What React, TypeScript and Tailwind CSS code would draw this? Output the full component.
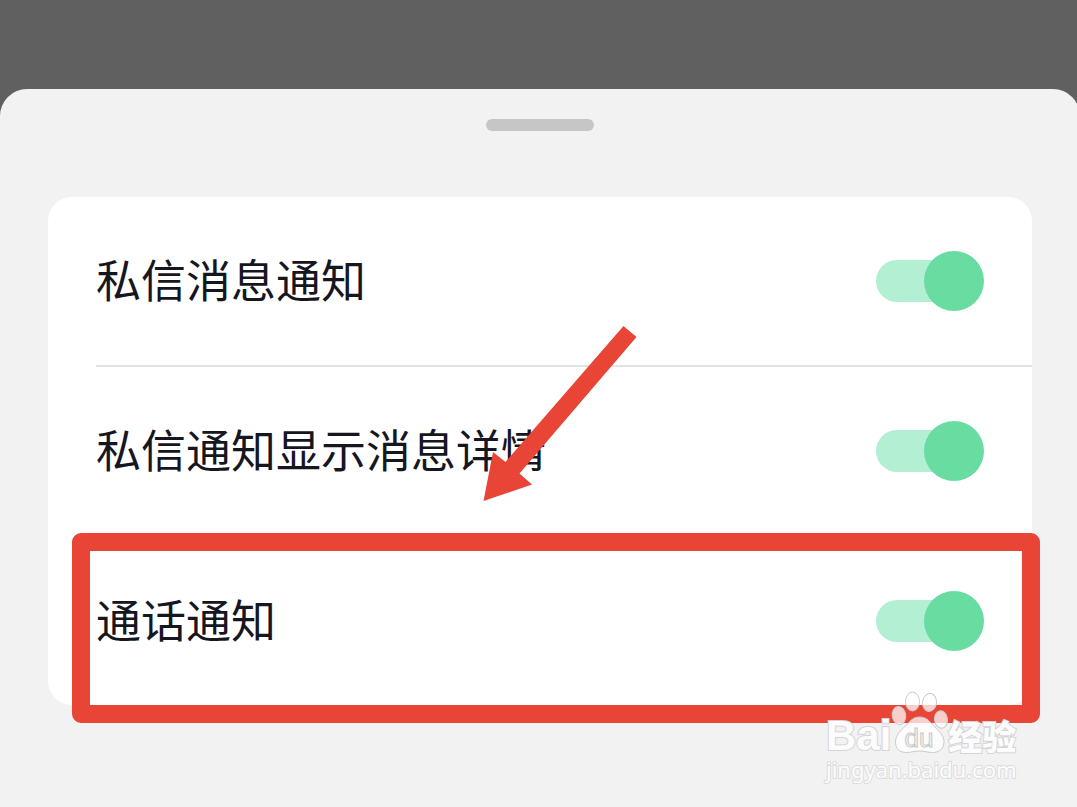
import { useState } from "react";

const options = [
  { id: "message", label: "私信消息通知" },
  { id: "detail", label: "私信通知显示消息详情" },
  { id: "call", label: "通话通知", highlighted: true },
];

function Switch({ id }: { id: string }) {
  const [on, setOn] = useState(true);
  return (
    <input
      id={id}
      type="checkbox"
      role="switch"
      checked={on}
      onChange={(e) => setOn(e.target.checked)}
      className="flex h-[60px] w-[108px] shrink-0 cursor-pointer appearance-none items-center rounded-full before:h-[42px] before:w-24 before:rounded-full before:bg-gray-200 after:-ml-24 after:size-[60px] after:rounded-full after:bg-gray-400 checked:before:bg-[#b2efd3] checked:after:-ml-12 checked:after:bg-[#68dca1]"
    />
  );
}

function Arrow() {
  return (
    <svg
      className="pointer-events-none absolute top-32 left-[435px] h-[178px] w-[156px]"
      viewBox="0 0 156 178"
      aria-hidden="true"
    >
      <path
        d="M140.500 1L153.500 12L36.500 148.500L49 159.500L.5 176L10 127L22.500 137Z"
        fill="#e84537"
      />
    </svg>
  );
}

function Paw() {
  return (
    <svg className="h-[62px] w-[57px] shrink-0" viewBox="0 0 57 62" aria-hidden="true">
      <g fill="#fff" fillOpacity="0.74" stroke="#cacaca" strokeWidth="1">
        <ellipse cx="8" cy="24.500" rx="6.800" ry="9" transform="rotate(-8 8 24.500)" />
        <ellipse cx="21.500" cy="10.500" rx="7" ry="9.500" />
        <ellipse cx="38.500" cy="11.500" rx="7" ry="9" transform="rotate(8 38.500 11.500)" />
        <ellipse cx="50" cy="28.500" rx="6.500" ry="8.800" transform="rotate(-6 50 28.500)" />
        <path d="M28.500 26C22.500 26 19.500 29.500 16 33.500C11.500 38 4.500 43 4.500 51C4.500 58.500 9.500 61.500 15.500 61.500C20 61.500 23.500 60 28.500 60C33.500 60 36.500 61.500 41.500 61.500C48.500 61.500 53 57.500 53 50.500C53 43.500 46 38.500 41.500 33.500C37.500 29 34.500 26 28.500 26Z" />
      </g>
      <text
        x="28"
        y="56"
        textAnchor="middle"
        fontFamily="Liberation Sans, sans-serif"
        fontWeight="400"
        fontSize="26"
        fill="#f6f6f6"
        stroke="#c8c8c8"
        strokeWidth="1"
      >
        du
      </text>
    </svg>
  );
}

function Watermark() {
  return (
    <div className="pointer-events-none absolute top-[602px] right-[58px] flex w-[196px] flex-col text-[#fcfcfc]">
      <div className="flex h-[62px] items-end">
        <span className="font-['Liberation_Sans',sans-serif] text-[42px] leading-[34px] font-bold [-webkit-text-stroke:2px_#d4d4d4] [paint-order:stroke_fill]">
          Bai
        </span>
        <Paw />
        <span className="font-['Liberation_Sans','Noto_Sans_CJK_SC',sans-serif] text-[34px] leading-[30px] font-black [-webkit-text-stroke:2px_#d4d4d4] [paint-order:stroke_fill]">
          经验
        </span>
      </div>
      <span className="font-['Noto_Sans',sans-serif] text-[22px] leading-8 [-webkit-text-stroke:2px_#dcdcdc] [paint-order:stroke_fill]">
        jingyan.baidu.com
      </span>
    </div>
  );
}

export default function App() {
  return (
    <div className="flex min-h-screen flex-col overflow-hidden bg-[#606060] pt-[89px] font-['Noto_Sans_CJK_SC',sans-serif] text-[#16161f]">
      <main className="relative -mr-[3px] flex-1 rounded-t-[27px] bg-[#f2f2f2] px-12 pt-[30px]">
        <div className="mx-auto h-3 w-[108px] rounded-full bg-[#c6c6c7]" />
        <section className="relative mt-[66px] rounded-3xl bg-white pl-12">
          <ul className="divide-y-2 divide-[#e3e3e4]">
            {options.map((option) => (
              <li
                key={option.id}
                className="relative box-content flex h-[168px] items-center justify-between pr-12"
              >
                <label htmlFor={option.id} className="pb-1 text-[45px] leading-[60px]">
                  {option.label}
                </label>
                <Switch id={option.id} />
                {option.highlighted && (
                  <span className="pointer-events-none absolute -top-1 -right-2 -bottom-[18px] -left-6 rounded-[9px] border-[18px] border-[#e84537]" />
                )}
              </li>
            ))}
          </ul>
          <Arrow />
        </section>
        <Watermark />
      </main>
    </div>
  );
}
